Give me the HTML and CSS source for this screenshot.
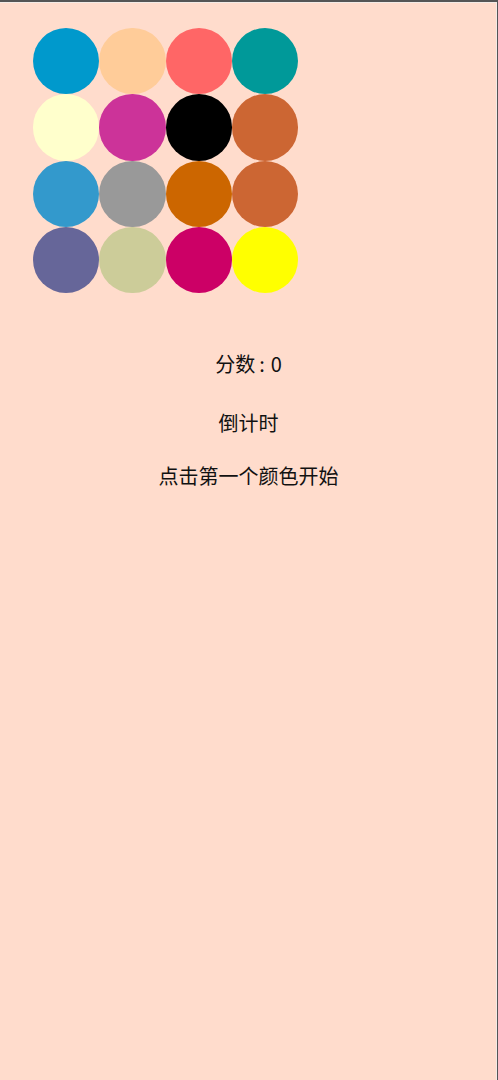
FILE: index.html
```html
<!DOCTYPE html>
<html lang="zh">
<head>
<meta charset="utf-8">
<title>颜色游戏</title>
<link rel="stylesheet" href="styles.css">
</head>
<body>
<div class="frame">
  <div class="board">
    <div class="dot c1"></div><div class="dot c2"></div><div class="dot c3"></div><div class="dot c4"></div>
    <div class="dot c5"></div><div class="dot c6"></div><div class="dot c7"></div><div class="dot c8"></div>
    <div class="dot c9"></div><div class="dot c10"></div><div class="dot c11"></div><div class="dot c12"></div>
    <div class="dot c13"></div><div class="dot c14"></div><div class="dot c15"></div><div class="dot c16"></div>
  </div>
  <div class="info">
    <p class="line score">分数<span class="colon">:</span>0</p>
    <p class="line timer">倒计时</p>
    <p class="line hint">点击第一个颜色开始</p>
  </div>
</div>
</body>
</html>
```

FILE: styles.css
```css
html, body {
  margin: 0;
  padding: 0;
  height: 100%;
}
body {
  background: #ffdccc;
  font-family: "Noto Sans CJK SC", "Noto Sans", sans-serif;
  color: #111;
}
.frame {
  box-sizing: border-box;
  height: 1080px;
  border-top: 2px solid #555;
  border-right: 1px solid #555;
  box-shadow: inset 0 1px 0 #f3ebe6, inset -1px 0 0 #f3ebe6;
  padding: 26px 0 0 33px;
}
.board {
  display: grid;
  grid-template-columns: repeat(4, 66.25px);
  grid-auto-rows: 66.25px;
  width: 265px;
}
.dot {
  border-radius: 50%;
}
.c1 { background: #0099cc; }
.c2 { background: #ffcc99; }
.c3 { background: #ff6666; }
.c4 { background: #009999; }
.c5 { background: #ffffcc; }
.c6 { background: #cc3399; }
.c7 { background: #000000; }
.c8 { background: #cc6633; }
.c9 { background: #3399cc; }
.c10 { background: #999999; }
.c11 { background: #cc6600; }
.c12 { background: #cc6633; }
.c13 { background: #666699; }
.c14 { background: #cccc99; }
.c15 { background: #cc0066; }
.c16 { background: #ffff00; }
.info {
  margin-left: -33px;
  padding-top: 58px;
  text-align: center;
  font-size: 20px;
  line-height: 26px;
}
.line {
  margin: 0;
}
.colon {
  display: inline-block;
  padding: 0 6px 0 4px;
}
.line.score { margin-bottom: 33px; }
.line.timer { margin-bottom: 27px; }
```
